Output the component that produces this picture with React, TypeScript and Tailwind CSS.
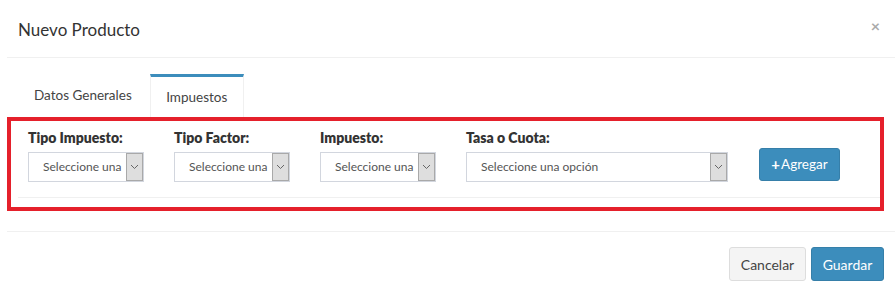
import React from 'react'

const font = { fontFamily: '"Lato", "Open Sans", "Liberation Sans", sans-serif' }

const Select: React.FC<{ width: string; text: string }> = ({ width, text }) => {
  return (
    <div className={`flex h-[30px] ${width} border border-[#d2d6de] bg-white`}>
      <div className="flex flex-1 items-center overflow-hidden whitespace-nowrap pl-[14px] text-[12px] text-[#555]">
        {text}
      </div>
      <div className="flex w-[17px] items-center justify-center border border-[#a9a9a9] bg-[#dedede]">
        <svg width="9" height="6" viewBox="0 0 9 6" fill="none">
          <path d="M1 1l3.5 3.5L8 1" stroke="#666" strokeWidth="1" />
        </svg>
      </div>
    </div>
  )
}

const Field: React.FC<{ label: string; width: string; text: string }> = ({ label, width, text }) => {
  return (
    <div className="flex flex-col">
      <label className="mb-[4px] text-[14px] font-extrabold leading-[20px] text-[#333]">{label}</label>
      <Select width={width} text={text} />
    </div>
  )
}

const App: React.FC = () => {
  return (
    <div className="h-[290px] w-[895px] overflow-hidden bg-white" style={font}>
      <div className="ml-[7px]">
        {/* header */}
        <div className="flex h-[58px] items-center justify-between border-b border-[#f0f0f0] pl-[11px] pr-[15px]">
          <h4 className="mt-[3px] text-[17px] text-[#333]">Nuevo Producto</h4>
          <span className="-mt-[6px] text-[16px] font-bold text-[#aaa]">×</span>
        </div>

        {/* tabs */}
        <div className="mt-[16px] flex h-[43px] pl-[10px]">
          <div className="flex items-center px-[17px] text-[13.5px] text-[#444]">Datos Generales</div>
          <div className="ml-[1px] flex w-[94px] items-center justify-center border-x border-t-[3px] border-x-[#f0f0f0] border-t-[#3c8dbc] text-[13.5px] text-[#444]">
            Impuestos
          </div>
        </div>

        {/* tab content, highlighted */}
        <div className="w-[877px] border-[4px] border-[#e5202b]">
          <div className="flex items-start pl-[17px] pt-[7px] pb-[15px]">
            <div className="flex gap-[30px]">
              <Field label="Tipo Impuesto:" width="w-[116px]" text="Seleccione una" />
              <Field label="Tipo Factor:" width="w-[116px]" text="Seleccione una" />
              <Field label="Impuesto:" width="w-[116px]" text="Seleccione una" />
              <Field label="Tasa o Cuota:" width="w-[262px]" text="Seleccione una opción" />
            </div>
            <button className="ml-[31px] mt-[20px] flex h-[33px] w-[81px] items-center justify-center rounded-[3px] border border-[#367fa9] bg-[#3c8dbc] text-[13.5px] text-white">
              <span className="mr-[1px] text-[15px] font-bold leading-none">+</span>Agregar
            </button>
          </div>
          <div className="ml-[7px] border-t border-[#f0f0f0] pb-[9px]" />
        </div>

        {/* footer */}
        <div className="mt-[20px] flex justify-end gap-[5px] border-t border-[#f0f0f0] pt-[15px] pr-[11px]">
          <button className="h-[34px] w-[77px] rounded-[3px] border border-[#ddd] bg-[#f4f4f4] text-[14px] text-[#444]">
            Cancelar
          </button>
          <button className="h-[34px] w-[73px] rounded-[3px] border border-[#367fa9] bg-[#3c8dbc] text-[14px] text-white">
            Guardar
          </button>
        </div>
      </div>
    </div>
  )
}

export default App
